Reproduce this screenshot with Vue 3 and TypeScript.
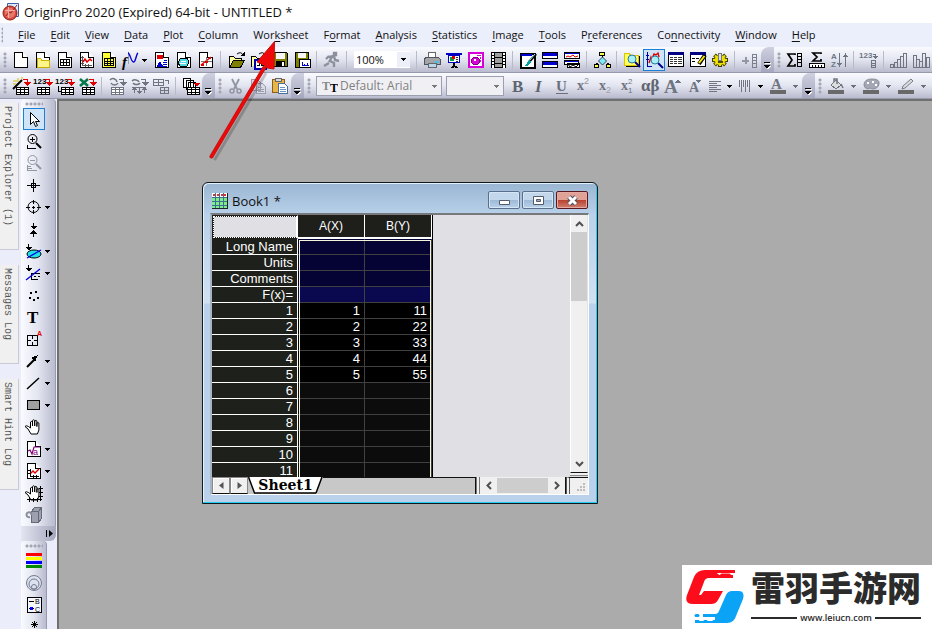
<script setup lang="ts">
import { h } from 'vue'

interface Shape {
  d?: string
  f?: string
  s?: string
  w?: number
  smooth?: boolean
  t?: string
  x?: number
  y?: number
  size?: number
  bold?: boolean
  italic?: boolean
  serif?: boolean
}

const K = '#000'
const G = '#6f7682'
const OL = '#808000'
const fill = (d: string, f = K): Shape => ({ d, f })
const line = (d: string, s = K, w = 1): Shape => ({ d, s, w })
const soft = (d: string, s = K, w = 1, f = 'none'): Shape => ({ d, s, w, f, smooth: true })
const text = (t: string, x: number, y: number, size: number, f = K, o: Partial<Shape> = {}): Shape => ({ t, x, y, size, f, ...o })

const page = (f = '#fff'): Shape[] => [{ d: 'M4.5 3.5h8l5 5v10h-13z', f, s: K }, { d: 'M12.5 3.5v5h5', f: '#fff', s: K }]
const table = (x: number, y: number, c = K): Shape[] => [
  { d: `M${x + 0.5} ${y + 0.5}h12v7h-12z`, f: '#fff', s: c },
  line(`M${x} ${y + 2.5}h13M${x} ${y + 5.5}h13M${x + 4.5} ${y}v8M${x + 8.5} ${y}v8`, c),
]
const redArrow = (c = '#e00000'): Shape[] => [line('M13 4.500h4.500v4', c), fill('M14 7h7l-3.500 4z', c)]
const lens = (x: number, y: number, c = '#a8f0f8'): Shape[] => [
  soft(`M${x + 3} ${y + 3}l5 5`, '#00008b', 2),
  soft(`M${x - 4} ${y}a4 4 0 1 0 8 0a4 4 0 1 0-8 0`, '#2a7a9a', 1, c),
]
const axes = line('M7.5 9v7.5h8', K)
const handD = 'M8 18l-3-5-3-2.5q1-1.500 3.500 0l2 1.500V6q1.500-1.500 2 0v4V4.500q1.300-1.500 2.200 0V10V5q1.300-1.300 2.200 0v5.500V7q1.500-1 2 0v7l-1.500 4z'

const icons: Record<string, Shape[]> = {
  new: page(),
  folder: [...page(), { d: 'M5.500 9.500h3l1.500 2h7v6.500h-11.500z', f: '#fff68a', s: '#c8b000' }],
  book: [...page(), line('M6 10.500h10M6 13.500h10M6 16.500h10M6.500 10v7M9.500 10v7M12.500 10v7M15.500 10v7')],
  graph: [...page(), line('M6.500 7v9.500h9M5 8.500h3M5 11.500h3M5 14.500h3M9.500 15v3M12.500 15v3', '#555'), soft('M7 13l2-3 2 3 3-3 2 2', '#e00000', 1.5)],
  matrix: [...page('#ffff30'), { d: 'M6.500 9.500h9v7h-9z', f: '#ffff30', s: K }, line('M6 12h10M6 14.500h10M9.500 9v8M12.500 9v8')],
  func: [soft('M8.500 3v12', '#9aa0b8', 1), text('f', 2, 18, 15, K, { bold: true, italic: true, serif: true }), soft('M8 4c2 0 3 9 5.500 9S16 5 18 4', '#0000d0', 1.4)],
  layout: [...page(), fill('M6 6h6v4H6z', '#e00000'), line('M13 11.500h3M12 13.500h4M12 15.500h4M6 17.500h10', '#0000c8'), fill('M6 17l3-5 3 5z', '#0000c8')],
  notes: [...page(), { d: 'M7 10l7-1 2 4-2 4H7l-2-3z', f: '#54dbe8', s: K, w: 1 }, line('M8 12.500h5M7 14.500h6', '#fff')],
  xyz: [...page(), soft('M6 16L16 8', '#e00000', 1.5), line('M11.500 8v9M6 12.500h11', '#777'), fill('M6 15h3v2H6zM10 12h3v2h-3zM14 8h2v2h-2z', '#e00000')],
  open: [{ d: 'M4.500 18.500v-11h4l2 2h6v3', f: '#ffffa0', s: K }, { d: 'M4.500 18.500l4-7h11l-4 7z', f: OL, s: K }, soft('M12 5q4-3 6 1', K), fill('M15 7h5V3z')],
  opengraph: [{ d: 'M4.500 17.500v-10h4l2 2h6v3', f: '#ffffa0', s: K }, { d: 'M7.500 10.500h11v9h-11z', f: '#fff', s: '#0000b0', w: 2 }, soft('M12 5q4-3 6 1', K), fill('M15 7h5V3z'), line('M10 16h2v-2h2v2h3', K)],
  save: [{ d: 'M4.500 3.500h13l1 1v13h-13l-1-1z', f: OL, s: K }, fill('M7 4h9v6H7z', '#f5f5f5'), fill('M7 12h9v6H7z'), fill('M13 13h2v4h-2z', '#fff')],
  savegraph: [{ d: 'M4.500 3.500h13v15h-13z', f: OL, s: K }, fill('M7 4h8v5H7z', '#f5f5f5'), { d: 'M8.500 10.500h11v8h-11z', f: '#fff', s: K }, line('M11 13v3.500h7M13 15v2M16 14v3', '#0000d0')],
  run: [soft('M13 4h2v2h-2zM8 8l5-1 1 4 4 1M11 8l-3 5M9 12l4 2v4M5 10l3-3M3 17l5-3', '#8b909c', 2.4)],
  print: [{ d: 'M7.500 3.500h7v6h-7z', f: '#fff', s: '#666' }, { d: 'M4.500 8.500h13l2 2v5h-16v-5z', f: '#a3a5a8', s: '#50545a' }, fill('M14 12h4v2h-4z', '#4ac0e8'), { d: 'M7.500 14.500h8v4h-8z', f: '#b8d6ee', s: '#666' }],
  slides: [fill('M3 4h16v2H3z', '#0000c0'), { d: 'M5.500 6.500h11v7h-11z', f: '#fff', s: '#0000c0' }, fill('M7 8h4v4H7z', '#00a040'), fill('M9 7h3v3H9z', '#e00000'), line('M13 8.500h2M13 10.500h2M13 12.500h2', '#333'), line('M11 14v3', K, 2), line('M8 18h3M12 18h3M9 17h5', K)],
  palette: [fill('M3 3h16v16H3z', '#d800d8'), fill('M5 5h12v12H5z', '#fff'), { d: 'M6.500 10.500l2-2h4l2 2v3l-2 2h-4l-2-2z', f: '#d800d8', s: '#800080' }, fill('M9 10h2v2H9z', '#fff'), line('M15.500 8v2M15.500 11v2M12 6.500h4', '#d800d8')],
  film: [fill('M4 3h15v16H4z'), fill('M8 4h7v4H8zM8 9h7v5H8zM8 15h7v3H8z', '#a0a0a0'), line('M6 4v15M17 4v15', '#fff', 2), line('M4 6.500h4M4 9.500h4M4 12.500h4M4 15.500h4M15 6.500h4M15 9.500h4M15 12.500h4M15 15.500h4')],
  brush: [{ d: 'M3.500 4.500h14v14h-14z', f: '#fff', s: K, w: 2 }, fill('M4 5h11v2H4z', '#0000d0'), soft('M19 5l-7 8', K, 2.6), soft('M18 5l-6 7', '#9ff', 1), fill('M12 11l2 2-4 4H8z', '#00a0a0')],
  tiles: [{ d: 'M3.500 3.500h15v6h-15zM3.500 12.500h15v6h-15z', f: '#fff', s: K, w: 1 }, fill('M4 4h14v3H4zM4 13h14v3H4z', '#0000d0')],
  charts: [{ d: 'M3.500 3.500h15v6h-15z', f: '#fff', s: K }, line('M4 4.500h14', '#0000d0'), soft('M5 8l2-1 2 1 3-2 2 2 3-1', '#e00000'), { d: 'M3.500 11.500h14v4h-14zM6.500 14.500h12v4h-12z', f: '#fff', s: K }, line('M4 12.500h13', '#0000d0'), soft('M7 15l2 3 3-2 3 2 3-3')],
  tree: [line('M11.500 7v3M7 14.500h-1.500v2M16 14.500h1.500v2'), { d: 'M8.500 3.500h5v3h-5zM3.500 15.500h4v3h-4zM15.500 15.500h4v3h-4z', f: '#ffff50', s: K }, { d: 'M11.500 8l4 4-4 4-4-4z', f: '#7fe9f5', s: '#345', smooth: true }],
  find: [{ d: 'M3.500 4.500h5l1 2h8v10h-14z', f: '#ffff60', s: '#d8c400' }, line('M18.500 7v10.500H5', K), ...lens(11, 10)],
  findgraph: [line('M4.500 3v14h4M3 6.500h3M3 10.500h3', '#0000a0'), soft('M6 14L8 8l1 2 2-5 2 1 2-2 1 4', '#e00000', 1.4), ...lens(12, 11)],
  list: [{ d: 'M3.500 4h15v13h-15z', f: '#fff', s: K }, fill('M3 3h16v3H3z', '#000080'), line('M5 8.500h3M9 8.500h3M13 8.500h4M5 10.500h3M9 10.500h3M13 10.500h4M5 12.500h3M9 12.500h3M13 12.500h4M5 14.500h3M9 14.500h3M13 14.500h4', '#333')],
  edit: [{ d: 'M3.500 4h15v13h-15z', f: '#fff', s: K }, fill('M3 3h16v3H3z', '#000080'), line('M5 9.500h3M9 9.500h3M5 12.500h3'), soft('M18 6l-6 9', K, 4), soft('M17.500 7L12 14', '#ffe800', 2)],
  gear: [
    soft('M11 4v14M3 11h16M5.500 6l11 10M16.500 6l-11 10', '#403c00', 4),
    soft('M11 5v12M4 11h14M6 6.500l10 9M16 6.500l-10 9', '#f0e200', 2),
    soft('M6 11a5 4.500 0 1 0 10 0a5 4.500 0 1 0-10 0', '#f0e200', 1, '#f0e200'),
    { d: 'M9.500 4.500h3v7h-3z', f: '#ddd', s: '#777' },
    fill('M9 12h5v2H9z', '#504800'),
  ],
  addcol: [line('M3 12h7M6.500 8v7', '#9297a4', 2), line('M13.500 5.500h4v13h-4zM13 8.500h5M13 11.500h5M13 14.500h5', '#7b808c')],
  sumcol: [soft('M11 6V5H4l4 6-4 6h7v-2', K, 1.7), line('M13.500 4.500h4v13h-4zM13 7.500h5M13 10.500h5M13 13.500h5')],
  sumrow: [soft('M15 5V4H7l4 4-4 4h8v-2', K, 1.7), { d: 'M3.500 14.500h15v4h-15z', f: '#fff', s: K }, line('M6.500 16v3M9.500 16v3M12.500 16v3M15.500 16v3')],
  sort: [text('A', 3, 10, 8, G, { bold: true }), text('Z', 3, 18, 8, G, { bold: true }), line('M11.500 4v13M17.500 5v13', G), fill('M9 14h5l-2.500 4zM15 8h5l-2.500-4z', G)],
  numtable: [text('123', 1, 9, 8, G, { bold: true }), line('M15 5.500h2v3', G), fill('M14 7h6l-3 3z', G), line('M13.500 11.500h4v7h-4zM13 14.500h5M13 16.500h5', G)],
  bars: [line('M2.500 15.500h3v3h-3zM6.500 13.500h3v5h-3zM9.500 10.500h3v8h-3zM12.500 7.500h3v11h-3zM15.500 4.500h3v14h-3z', G)],
  bars2: [line('M3.500 6.500h3v12h-3zM6.500 10.500h3v8h-3zM9.500 12.500h3v6h-3zM12.500 4.500h3v14h-3zM16.500 8.500h3v10h-3z', G)],
  wizard: [soft('M3 14l9-9', K, 2), soft('M8 3v4M3 6h4M3 9h3M12 2v2', '#d0c000', 1), ...redArrow(), ...table(6, 12)],
  imp: [text('123', 1, 9, 8, K, { bold: true }), ...redArrow(), ...table(5, 12)],
  imp2: [text('123', 1, 9, 8, K, { bold: true }), ...redArrow(), line('M4.500 11v5h3'), ...table(7, 12)],
  excel: [soft('M4 4l8 7M12 4l-8 7', '#007848', 2.5), ...redArrow(), ...table(6, 12)],
  rec1: [...redArrow(G), ...table(5, 12, G), soft('M4 5a4 4 0 0 1 7 2M12 8a4 4 0 0 1-7 0', G, 1.5)],
  rec2: [...redArrow(G), line('M4 12.500h14', G), soft('M4 6a4 3 0 0 1 7 1M12 8a4 3 0 0 1-7 0', G, 1.5), line('M6.500 12v6M11.500 12v6M16.500 12v6', G), fill('M4 15h5l-2.500-3zM9 16h5l-2.500 3zM14 15h5l-2.500-3z', G)],
  rec3: [line('M3.500 4.500h10v6h-10zM3 7.500h11M8.500 4v7', G), line('M15 5.500h3v3M10.500 12.500h8v6h-8zM10 15.500h9M14.500 12v7', G)],
  dup: [{ d: 'M3.500 3.500h7v9h-7zM6.500 5.500h7v9h-7zM8.500 7.500h7v9h-7z', f: '#fff', s: K }, fill('M14 8h6l-3 4z', '#e00000'), ...table(7, 12)],
  cut: [soft('M7 4l5 10M14 4L9 14', '#9095a2', 1.8), soft('M5 16a2 2 0 1 0 4 0a2 2 0 1 0-4 0M12 16a2 2 0 1 0 4 0a2 2 0 1 0-4 0', '#9095a2', 1.5)],
  copy: [{ d: 'M4.500 4.500h6l3 3v8h-9zM9.500 8.500h6l3 3v7h-9z', f: '#d8dae4', s: '#9a9eac' }, line('M6 9.500h3M11 12.500h4M11 14.500h6M11 16.500h6', '#9a9eac')],
  paste: [{ d: 'M3.500 4.500h12v13h-12z', f: '#e8b54a', s: '#8a6018' }, { d: 'M6.500 3.500h6v3h-6z', f: '#d8d8d8', s: '#666' }, { d: 'M9.500 8.500h6l3 3v7h-9z', f: '#fff', s: '#4b6f9c' }, line('M11 12.500h5M11 14.500h6M11 16.500h6', '#6b93c0')],
  bold: [text('B', 5, 17, 17, '#5f6570', { bold: true, serif: true })],
  italic: [text('I', 6, 17, 17, '#5f6570', { bold: true, italic: true, serif: true })],
  underline: [text('U', 5, 16, 15, '#6b717c', { serif: true, bold: true }), line('M5 18.500h12', '#6b717c')],
  sup: [text('x', 4, 15, 14, G, { bold: true, serif: true }), text('2', 11, 9, 9, '#8f94a0')],
  sub: [text('x', 4, 15, 14, G, { bold: true, serif: true }), text('2', 11, 18, 9, '#a0a4b0')],
  supsub: [text('x', 4, 15, 14, G, { bold: true, serif: true }), text('2', 11, 9, 8, G), text('1', 11, 18, 8, G)],
  greek: [text('αβ', 2, 16, 17, '#5f6570', { bold: true, serif: true })],
  bigger: [text('A', 3, 18, 19, G, { bold: true, serif: true }), fill('M14 8h6l-3-4z', G)],
  smaller: [text('A', 6, 17, 14, G, { bold: true, serif: true }), fill('M13 5h5l-2.500 3z', G)],
  align: [line('M4 6.500h12M4 8.500h8M4 10.500h12M4 12.500h8M4 14.500h12M4 16.500h8', G)],
  columns: [line('M3.500 5v7M5.500 5v12M7.500 5v7M9.500 5v12M11.500 5v7M13.500 5v12', G)],
  color: [text('A', 4, 14, 15, G, { bold: true, serif: true }), fill('M3 15h16v4H3z', '#696969')],
  bucket: [{ d: 'M6 10l5-5 5 5-5 4z', f: '#ddd', s: G }, soft('M9 7V4h3v5M16 9l2 4', G, 1.5), fill('M3 15h16v4H3z', '#696969')],
  brushfill: [soft('M4 10q0-6 8-6t7 5-7 5q-2-2-4 0-4-1-4-4z', '#888d98', 1, '#a5a8b4'), fill('M7 7h2v2H7zM12 6h2v2h-2zM15 9h2v2h-2z', '#fff'), fill('M3 15h16v4H3z', '#696969')],
  pen: [soft('M7 14l1-3 8-7 2 2-8 7z', '#777c88', 1, '#ddd'), fill('M3 15h16v4H3z', '#696969')],
  pointer: [{ d: 'M7.500 4.500v12l3-3 2 5 2-1-2-4h4z', f: '#fff', s: K, smooth: true }],
  zoomin: [soft('M5 9a4.500 4.500 0 1 0 9 0a4.500 4.500 0 1 0-9 0', K), line('M9.500 7v5M7 9.500h5', K), soft('M13 13l5 5', K, 2), line('M4.500 15v3h8')],
  zoomout: [soft('M5 8a4.500 4.500 0 1 0 9 0a4.500 4.500 0 1 0-9 0', '#9297a4'), line('M7 8.500h5', '#9297a4'), soft('M13 12l5 5', '#9297a4', 2), line('M4.500 13v5.500h9M5 14.500h3M5 16.500h4', '#9297a4')],
  cross: [line('M10.500 5v13M4 11.500h13'), line('M8.500 9.500h4v4h-4z')],
  target: [soft('M5 11a5.500 5.500 0 1 0 11 0a5.500 5.500 0 1 0-11 0', K), line('M10.500 4v4M10.500 14v4M3 11.500h4M14 11.500h4M9 11.500h3M10.500 10v3')],
  range: [line('M10.500 5v6M10.500 13v6'), fill('M7 8h7l-3.500 3.500zM7 16h7l-3.500-4z')],
  mask: [soft('M4 14a7 4 0 1 0 14 0a7 4 0 1 0-14 0', K, 1, '#20e0e8'), soft('M4 18L18 10', '#0000e0', 1.3), line('M5.500 4v6'), fill('M2 7h7l-3.500 3.500z')],
  maskgraph: [line('M8.500 11v7M9 11.500h8M9 17.500h6', K), line('M11 14.500h2M15 14.500h2', K), soft('M3 18L17 7', '#0000e0', 1.3), line('M5.500 3v6'), fill('M2 6h7l-3.500 3.500z')],
  dots: [fill('M7 8h2v2H7zM12 7h2v2h-2zM6 13h2v2H6zM10 15h2v2h-2zM14 13h2v2h-2z')],
  text: [text('T', 4, 17, 17, K, { bold: true, serif: true })],
  scale: [line('M4.500 7.500h10v10h-10z'), line('M9.500 8v3M9.500 14v4M4 12.500h4M11 12.500h4'), text('A', 14, 8, 7, '#e00000', { bold: true })],
  arrow: [soft('M4 17l8-8', K, 2), fill('M8 8l7-3-3 7z')],
  line: [soft('M4 17L16 6', K, 1.5)],
  rect: [{ d: 'M4.500 6.500h12v9h-12z', f: '#a0a0a0', s: K }],
  hand: [{ d: handD, f: '#fff', s: K, smooth: true }],
  formula: [...page(), soft('M5 13l2-1 2 4 2-7h6', '#800080', 1.2), text('a', 10, 17, 9, '#800080')],
  insgraph: [...page(), axes, soft('M7 14l3-3 2 2 4-4', '#e00000', 1.4), line('M5 10.500h3M5 13.500h3M10.500 15v3M13.500 15v3')],
  handaxes: [{ d: handD, f: '#fff', s: K, smooth: true }, line('M17.500 4v15M16 6.500h4M16 10.500h4M16 14.500h4M4 17.500h15M6.500 16v4M10.500 16v4M14.500 16v4')],
  cube: [{ d: 'M8.500 7.500l3-4h7v11l-3 4h-7z', f: '#9ca1ad', s: '#646a76' }, line('M15.500 18V7.500l3-4M8 7.500h7', '#646a76'), soft('M7 13a2.500 2.500 0 1 1 1.500-2', '#8a8f9c', 2)],
  stripes: [fill('M3 3h16v3H3z', '#f00'), fill('M3 7h16v3H3z', '#ff0'), fill('M3 11h16v3H3z', '#00f'), fill('M3 15h16v3H3z', '#080')],
  circle: [soft('M3.500 11a7.500 7.500 0 1 0 15 0a7.500 7.500 0 1 0-15 0M6 12a5 5 0 1 0 10 0a5 5 0 1 0-10 0M8.500 15a2.500 2.500 0 1 0 5 0a2.500 2.500 0 1 0-5 0', '#767c90', 1, '#dce1ee')],
  legend: [{ d: 'M4.500 3.500h14v15h-14z', f: '#f5f7ff', s: K }, line('M6 7.500h5M6 14.500h5', K), fill('M7 13h3v3H7z', '#00f'), text('B', 12, 10, 7), text('C', 12, 18, 7)],
  star: [line('M11.500 5v7M8 8.500h7', K, 1), soft('M9 6l5 5M14 6l-5 5'), line('M4 14.500h15')],
}

const Icon = (props: { name: string }) =>
  h(
    'svg',
    { width: 22, height: 22, viewBox: '0 0 22 22', 'aria-hidden': 'true' },
    (icons[props.name] ?? []).map((p) =>
      p.t
        ? h('text', {
            x: p.x, y: p.y, fill: p.f, 'font-size': p.size,
            'font-weight': p.bold ? 700 : 400,
            'font-style': p.italic ? 'italic' : 'normal',
            'font-family': p.serif ? 'Liberation Serif, serif' : 'Liberation Sans, sans-serif',
          }, p.t)
        : h('path', {
            d: p.d, fill: p.f ?? 'none', stroke: p.s ?? 'none', 'stroke-width': p.w ?? 1,
            'shape-rendering': p.smooth ? 'auto' : 'crispEdges',
          }),
    ),
  )
Icon.props = ['name']

const menus = ['&File', '&Edit', '&View', '&Data', '&Plot', '&Column', 'Wor&ksheet', 'F&ormat', '&Analysis', '&Statistics', '&Image', '&Tools', 'P&references', 'Co&nnectivity', '&Window', '&Help'].map((m) => {
  const i = m.indexOf('&')
  return { pre: m.slice(0, i), key: m[i + 1], post: m.slice(i + 2) }
})

/* "|" is a separator, "v" a menu arrow ("V" is greyed), "zoom", "font" and "size" are drop-downs */
interface Bar { items: string[]; cap: boolean }
const bar = (s: string, cap = true): Bar => ({ items: s.split(' '), cap })
const rows: Bar[][] = [
  [
    bar('new folder book graph matrix func v layout notes xyz | open opengraph save savegraph | run | zoom | print slides palette film | brush tiles charts | tree | find findgraph list edit gear | addcol'),
    bar('sumcol sumrow sort | numtable | bars bars2', false),
  ],
  [
    bar('wizard imp imp2 excel | rec1 rec2 rec3 | dup'),
    bar('cut copy paste'),
    bar('font size bold italic underline sup sub supsub greek bigger smaller align v columns v color V'),
    bar('bucket V brushfill V pen V', false),
  ],
]

const tools: { icon: string; drop?: boolean }[] = [
  { icon: 'pointer' }, { icon: 'zoomin' }, { icon: 'zoomout' }, { icon: 'cross' }, { icon: 'target', drop: true },
  { icon: 'range' }, { icon: 'mask', drop: true }, { icon: 'maskgraph', drop: true }, { icon: 'dots' }, { icon: 'text' },
  { icon: 'scale' }, { icon: 'arrow', drop: true }, { icon: 'line', drop: true }, { icon: 'rect', drop: true }, { icon: 'hand' },
  { icon: 'formula', drop: true }, { icon: 'insgraph', drop: true }, { icon: 'handaxes' }, { icon: 'cube' },
]
const styleTools = ['stripes', 'circle', 'legend', 'star']
const docks = ['Project Explorer (1)', 'Messages Log', 'Smart Hint Log']

const sheet: { label: string; kind: string; a: string; b: string }[] = [
  ...['Long Name', 'Units', 'Comments', 'F(x)='].map((label, i) => ({ label, kind: i === 3 ? 'fx' : 'meta', a: '', b: '' })),
  ...Array.from({ length: 11 }, (_, i) => {
    const n = i + 1
    return { label: String(n), kind: n <= 5 ? 'data' : 'empty', a: n <= 5 ? String(n) : '', b: n <= 5 ? String(n * 11) : '' }
  }),
]
</script>

<template>
  <div class="app">
    <header class="title">
      <svg class="logo" width="20" height="20" viewBox="0 0 20 20" aria-hidden="true">
        <path d="M6.500 1.500h11v13h-11z" fill="#dfe9fb" stroke="#3c5fa8" />
        <circle cx="9" cy="11" r="7" fill="#d9493c" stroke="#8d2018" />
        <circle cx="9" cy="11" r="5" fill="#e8776a" />
        <path d="M5 14l3-4 2 1 6-8" fill="none" stroke="#a01c14" stroke-width="1" />
        <path d="M4 8.500h10M7.500 5v11" stroke="#f4b0a6" />
      </svg>
      <span>OriginPro 2020 (Expired) 64-bit - UNTITLED *</span>
    </header>

    <nav class="menu">
      <i class="grip"></i>
      <button v-for="m in menus" :key="m.pre + m.key + m.post" type="button">{{ m.pre }}<u>{{ m.key }}</u>{{ m.post }}</button>
    </nav>

    <div v-for="(row, r) in rows" :key="r" class="row">
      <div v-for="(group, g) in row" :key="g" class="bar" :class="{ last: !group.cap }" role="toolbar">
        <i class="grip"></i>
        <template v-for="(it, i) in group.items" :key="i">
          <i v-if="it === '|'" class="sep"></i>
          <i v-else-if="it === 'v'" class="drop"></i>
          <i v-else-if="it === 'V'" class="drop wide"></i>
          <span v-else-if="it === 'zoom'" class="combo zoom">
            <select aria-label="Zoom"><option>100%</option></select><i class="drop"></i>
          </span>
          <span v-else-if="it === 'font'" class="combo font">
            <svg width="16" height="18" viewBox="0 0 16 18" aria-hidden="true">
              <text x="0" y="13" font-size="12" font-weight="700" font-family="Liberation Serif, serif" fill="#888">T</text>
              <text x="8" y="15" font-size="12" font-weight="700" font-family="Liberation Serif, serif">T</text>
            </svg>
            <select aria-label="Font"><option>Default: Arial</option></select><i class="drop grey"></i>
          </span>
          <span v-else-if="it === 'size'" class="combo size">
            <select aria-label="Font size"><option></option></select><i class="drop grey"></i>
          </span>
          <button v-else type="button" class="tool" :class="{ on: it === 'findgraph' }" :aria-label="it"><Icon :name="it" /></button>
        </template>
        <button v-if="group.cap" type="button" class="cap" aria-label="More"><i></i></button>
      </div>
    </div>

    <main class="body">
      <aside class="docks">
        <button v-for="d in docks" :key="d" type="button">{{ d }}</button>
      </aside>
      <aside class="side">
        <div class="vbar">
          <i class="hgrip"></i>
          <div v-for="(t, i) in tools" :key="t.icon" class="slot">
            <button type="button" class="tool" :class="{ on: i === 0 }" :aria-label="t.icon"><Icon :name="t.icon" /></button>
            <i v-if="t.drop" class="drop"></i>
          </div>
        </div>
        <button type="button" class="vcap" aria-label="More tools">
          <svg width="9" height="7" viewBox="0 0 9 7" aria-hidden="true"><path d="M1 0h1v7H1zM4 0l4 3.500L4 7z" /></svg>
        </button>
        <div class="vbar narrow">
          <i class="hgrip"></i>
          <div v-for="t in styleTools" :key="t" class="slot">
            <button type="button" class="tool" :aria-label="t"><Icon :name="t" /></button>
          </div>
        </div>
      </aside>

      <section class="desk">
        <div class="win">
          <div class="wtitle">
            <svg width="16" height="16" viewBox="0 0 16 16" shape-rendering="crispEdges" aria-hidden="true">
              <path d="M0 0h15v15H0z" fill="#7dec8b" />
              <path d="M0 0h15v4H0z" fill="#fff" />
              <path d="M1 1h2v2H1zM5 1h2v2H5zM9 1h2v2H9zM12 1h2v2h-2z" fill="#e03030" />
              <path d="M0 4.500h15M0 8.500h15M0 12.500h15M3.500 0v15M7.500 0v15M11.500 0v15" stroke="#3f6f90" />
              <path d="M15.500 0v15.500H0" fill="none" stroke="#222" />
            </svg>
            <span>Book1 *</span>
            <button type="button" aria-label="Minimize"><svg width="13" height="11" viewBox="0 0 13 11"><path d="M1.500 5.500h10v4h-10z" fill="#fff" stroke="#555b68" /></svg></button>
            <button type="button" aria-label="Maximize"><svg width="13" height="11" viewBox="0 0 13 11"><path d="M1.500 1.500h10v8h-10z" fill="#fff" stroke="#555b68" /><path d="M4.500 4.500h4v2h-4z" fill="#8fb0d0" stroke="#555b68" /></svg></button>
            <button type="button" class="close" aria-label="Close"><svg width="13" height="11" viewBox="0 0 13 11"><path d="M3 2l7 7M10 2L3 9" stroke="#4d4f60" stroke-width="5" /><path d="M3 2l7 7M10 2L3 9" stroke="#fff" stroke-width="3" /></svg></button>
          </div>

          <div class="client">
            <div class="upper">
              <div class="pane">
                <div class="grid">
                  <table>
                    <thead>
                      <tr><td class="corner"></td><th scope="col">A(X)</th><th scope="col">B(Y)</th></tr>
                    </thead>
                    <tbody>
                      <tr v-for="s in sheet" :key="s.label" :class="s.kind">
                        <th scope="row">{{ s.label }}</th><td>{{ s.a }}</td><td>{{ s.b }}</td>
                      </tr>
                    </tbody>
                  </table>
                  <div class="frame"></div>
                </div>
              </div>
              <div class="vscroll">
                <button type="button" aria-label="Scroll up"><svg width="9" height="6" viewBox="0 0 9 6"><path d="M1 5l3.500-3.500L8 5" /></svg></button>
                <div class="thumb"></div>
                <button type="button" aria-label="Scroll down"><svg width="9" height="6" viewBox="0 0 9 6"><path d="M1 1l3.500 3.500L8 1" /></svg></button>
              </div>
            </div>
            <div class="lower">
              <button type="button" class="nav" aria-label="Previous sheet"><svg width="5" height="7" viewBox="0 0 5 7"><path d="M4.500 0v7L0 3.500z" fill="#555" /></svg></button>
              <button type="button" class="nav" aria-label="Next sheet"><svg width="5" height="7" viewBox="0 0 5 7"><path d="M0.500 0v7L5 3.500z" fill="#555" /></svg></button>
              <button type="button" class="tab">
                <svg width="75" height="17" viewBox="0 0 75 17" aria-hidden="true"><path d="M0 0h74l-6 16H6z" fill="#fff" /><path d="M0.500 0l6 16M74 0l-6 16M6 16h62" fill="none" stroke="#000" stroke-width="1.500" /></svg>
                <span>Sheet1</span>
              </button>
              <div class="tray"></div>
              <div class="hscroll">
                <button type="button" aria-label="Scroll left"><svg width="6" height="9" viewBox="0 0 6 9"><path d="M5 1L1.500 4.500L5 8" /></svg></button>
                <div class="thumb"></div>
                <button type="button" aria-label="Scroll right"><svg width="6" height="9" viewBox="0 0 6 9"><path d="M1 1l3.500 3.500L1 8" /></svg></button>
              </div>
              <div class="sizer">
                <svg width="9" height="9" viewBox="0 0 9 9" aria-hidden="true"><path d="M6 0h2v2H6zM3 3h2v2H3zM6 3h2v2H6zM0 6h2v2H0zM3 6h2v2H3zM6 6h2v2H6z" fill="#bdbdbd" /></svg>
              </div>
            </div>
          </div>
        </div>
      </section>
    </main>

    <svg class="pointer" width="84" height="126" viewBox="0 0 84 126" aria-hidden="true">
      <path d="M5.500 121L57 34" stroke="#000" stroke-opacity=".2" stroke-width="3" transform="translate(3 3)" />
      <path d="M5.500 120.500L58 32" stroke="#b81818" stroke-width="4" stroke-linecap="round" />
      <path d="M5.500 120.500L58 32" stroke="#f00808" stroke-width="2.500" stroke-linecap="round" />
      <path d="M68.500 5.500L51 26l7 3 3 3 7 1z" fill="#f00808" stroke="#c81010" />
    </svg>

    <div class="brand">
      <svg width="60" height="56" viewBox="0 0 60 56" aria-hidden="true">
        <path d="M50 1H20Q12 1 9 8L2 26q-3 9 6 9h18q5 0 7-4l5-9H19l-3 4h-2l5-13q1-4 5-4h24V6H32V4h18z" fill="#fc0d1b" />
        <path d="M10 54h32q7 0 9-7l7-17q2-8-4-8h-7q-4 0-6 4l-7 16q-1 3-4 3H18v3h12v3H10z" fill="#0ba3f5" />
        <path d="M11 46.500h2" stroke="#0ba3f5" stroke-width="3" stroke-linecap="round" />
        <path d="M31 6.500h1M37 6.500h7" stroke="#fc0d1b" stroke-width="4" stroke-linecap="round" />
        <path d="M15 51h3M23 51h4" stroke="#fff" stroke-width="2" stroke-linecap="round" />
      </svg>
      <div class="words">
        <strong>雷羽手游网</strong>
        <small>www.leiucn.com</small>
      </div>
    </div>
  </div>
</template>

<style>
body { margin: 0; overflow: hidden; }
</style>

<style scoped>
.app { position: relative; display: flex; flex-direction: column; height: 100vh; overflow: hidden; background: #ebedfb; color: #111; font-family: "Open Sans", "Noto Sans", sans-serif; font-size: 12px; }
button, select { border: 0; margin: 0; padding: 0; background: none; color: inherit; font: inherit; border-radius: 0; }
svg { display: block; flex: none; }

.title { flex: none; display: flex; align-items: center; gap: 3px; height: 23px; padding-left: 1px; background: #fff; font-size: 13px; white-space: nowrap; }
.menu { flex: none; display: flex; align-items: center; gap: 15px; height: 24px; background: #ebeefb; font-size: 11px; }
.menu .grip { width: 3px; background-position: -2px 0; }
.menu button { line-height: 20px; white-space: nowrap; }
.menu u { text-underline-offset: 2px; }

.grip { flex: none; align-self: center; box-sizing: border-box; width: 10px; height: 16px; background: radial-gradient(circle at 5px 2px, #a4a6b4 1px, transparent 2px) 0 0 / 10px 4px; }
.row { flex: none; display: flex; height: 26px; background: #b5b7cd; }
.bar { flex: none; display: flex; align-items: center; height: 25px; background: linear-gradient(#fafbff, #e3e5f0 50%, #babccf); border-bottom: 1px solid #9799ac; }
.bar.last { flex: 1 0 0; }
.sep { flex: none; width: 1px; height: 18px; margin: 0 4px 0 3px; background: #b9bbc8; }
.tool { flex: none; display: block; box-sizing: border-box; width: 22px; height: 22px; }
.tool.on { background: #cfe4f7; box-shadow: inset 0 0 0 1px #1b7fd6; }
.drop { flex: none; align-self: center; width: 9px; height: 22px; background: linear-gradient(#000, #000) 0 10px / 5px 1px no-repeat, linear-gradient(#000, #000) 1px 11px / 3px 1px no-repeat, linear-gradient(#000, #000) 2px 12px / 1px 1px no-repeat; }
.drop.wide { margin-left: 4px; opacity: .5; }
.drop.grey { opacity: .5; }
.cap { flex: none; align-self: stretch; display: flex; align-items: flex-end; justify-content: center; width: 13px; padding-bottom: 3px; border-radius: 8px 0 0 0; background: linear-gradient(#cfd1e0, #a5a7be); }
.cap i { width: 7px; height: 7px; background: linear-gradient(#000, #000) 0 0 / 6px 1px no-repeat, linear-gradient(#000, #000) 0 3px / 6px 1px no-repeat, linear-gradient(#000, #000) 1px 4px / 4px 1px no-repeat, linear-gradient(#000, #000) 2px 5px / 2px 1px no-repeat; filter: drop-shadow(1px 1px 0 #fff); }
.combo { flex: none; display: flex; align-items: center; box-sizing: border-box; overflow: hidden; }
.combo select { flex: 1; min-width: 0; appearance: none; outline: 0; white-space: nowrap; }
.zoom { width: 56px; height: 17px; margin: 0 3px; padding-left: 2px; background: #fff; font-size: 11px; }
.zoom .drop { width: 13px; height: 15px; background-color: #eceef8; background-position: 4px 6px, 5px 7px, 6px 8px; }
.font { width: 126px; height: 20px; margin: 0 2px; padding-left: 5px; gap: 2px; border: 1px solid #9c9fae; background: #f0f0f4; color: #808080; }
.size { width: 58px; height: 20px; margin: 0 3px 0 2px; border: 1px solid #9c9fae; background: #f0f0f4; }

.body { flex: 1; min-height: 0; display: flex; }
.docks { flex: none; display: flex; flex-direction: column; align-items: flex-start; gap: 15px; width: 21px; padding-top: 4px; }
.docks button { writing-mode: vertical-rl; box-sizing: border-box; width: 19px; padding: 3px 4px 23px 0; background: #f0f0f0; border-right: 1px solid #c9cad6; border-bottom: 1px solid #c9cad6; color: #555; font: 10px/13px "Liberation Mono", monospace; text-align: start; white-space: nowrap; }
.side { flex: none; width: 36px; overflow: hidden; }
.vbar { box-sizing: border-box; width: 35px; padding: 3px 0 0 2px; border-radius: 4px 4px 0 0; background: linear-gradient(90deg, #fafbff, #e3e5f0 50%, #b9bbcf); border-right: 1px solid #9799ac; }
.vbar.narrow { width: 26px; }
.hgrip { display: block; width: 18px; height: 6px; margin-left: 2px; background: radial-gradient(circle at 2px 2px, #a4a6b4 1px, transparent 2px) 0 0 / 4px 6px; }
.slot { display: flex; height: 22px; }
.vcap { display: flex; justify-content: flex-end; align-items: center; box-sizing: border-box; width: 35px; height: 15px; padding-right: 2px; border-radius: 0 0 6px 0; background: linear-gradient(90deg, #e3e5f0, #a5a7be); }

.desk { flex: 1; min-width: 0; position: relative; overflow: hidden; background: #ababab; border-top: 2px solid #707070; border-left: 2px solid #707070; }
.win { position: absolute; left: 143px; top: 81px; display: flex; flex-direction: column; box-sizing: border-box; width: 396px; height: 322px; padding: 0 8px 8px 7px; border: 1px solid #101820; border-radius: 6px 6px 0 0; background: linear-gradient(#9ab6d2, #b9d1ea 32px, #d0e1f3 120px, #b9d1ea 121px); box-shadow: inset -1px -1px 0 #22cdf0, inset 1px 1px 0 #e4f2fc; }
.wtitle { flex: none; display: flex; align-items: center; gap: 2px; height: 30px; padding: 2px 1px 0 2px; box-sizing: border-box; font-size: 13px; }
.wtitle > svg { margin: 3px 2px 0 0; }
.wtitle span { flex: 1; padding-top: 4px; }
.wtitle button { display: flex; align-items: center; justify-content: center; box-sizing: border-box; width: 32px; height: 18px; margin-top: 2px; border: 1px solid #5b6f8c; border-radius: 2px; background: linear-gradient(#c3d7ec 50%, #9db9d6 50%, #b8d2ea); box-shadow: inset 0 0 0 1px #d5e5f4; }
.wtitle .close { border-color: #5a1720; background: linear-gradient(#e0a196 50%, #b8402c 50%, #d08070); box-shadow: inset 0 0 0 1px #e4aba2; }

.client { flex: 1; min-height: 0; display: flex; flex-direction: column; border: 1px solid #fff; border-top: 2px solid #77787c; border-left: 2px solid #a9b4c2; background: #e0dfe4; }
.upper { flex: 1; min-height: 0; display: flex; }
.pane { flex: 1; min-width: 0; overflow: hidden; }
.grid { position: relative; width: 221px; background: #000; }
table { width: 220px; table-layout: fixed; border-collapse: separate; border-spacing: 0; color: #fff; font: 13px/15px "Liberation Sans", Arial, sans-serif; }
th, td { box-sizing: border-box; padding: 0; font-weight: 400; overflow: hidden; }
thead tr { height: 24px; }
thead th { background: #1e1e1a; border-right: 1px solid #fff; border-bottom: 2px solid #fff; font-size: 12px; text-align: center; }
.corner { width: 86px; background: #e0dfe4; border: 2px solid #1e1e1a; border-right: 2px solid #fff; outline: 1px dotted #fff; outline-offset: -2px; }
tbody tr { height: 16px; }
tbody th { height: 16px; padding-right: 4px; text-align: right; background: #1e201b; border-right: 1px solid #fff; border-bottom: 1px solid #fff; white-space: nowrap; }
tbody td { height: 16px; padding-right: 4px; text-align: right; background: #0c0c0c; border-right: 1px solid #404040; border-bottom: 1px solid #404040; }
.meta td { background: #050334; }
.fx td { background: #0a084e; }
.data td { background: #000; }
.frame { position: absolute; left: 87px; top: 25px; right: 2px; bottom: 0; border: 1px solid #f4f4d8; border-bottom: 0; pointer-events: none; }

.vscroll { flex: none; display: flex; flex-direction: column; box-sizing: border-box; width: 18px; margin-bottom: 4px; border-left: 1px solid #fff; border-right: 1px solid #e3e3e3; border-bottom: 1px solid #111; background: #f0f0f0; box-shadow: 0 2px 0 #f0f0f0, 0 3px 0 #888; }
.vscroll button { display: flex; align-items: center; justify-content: center; height: 17px; }
.vscroll .thumb { height: 69px; margin-bottom: auto; background: #cdcdcd; }
.vscroll path, .hscroll path { fill: none; stroke: #505050; stroke-width: 2; }
.lower { flex: none; display: flex; height: 17px; background: #c8c8c8; }
.nav { flex: none; display: flex; align-items: center; justify-content: center; box-sizing: border-box; width: 18px; background: #f0f0f0; border: 1px solid #888; border-bottom-color: #111; box-shadow: inset 1px 1px 0 #fff; }
.tab { flex: none; position: relative; width: 75px; color: #000; font: bold 14px/16px "DejaVu Serif", "Liberation Serif", serif; }
.tab span { position: absolute; inset: 0; }
.tray { flex: 1; border-top: 1px solid #111; border-right: 1px solid #111; }
.hscroll { flex: none; display: flex; align-items: center; box-sizing: border-box; width: 90px; border-left: 4px double #777; border-right: 1px solid #111; background: #f0f0f0; }
.hscroll button { display: flex; align-items: center; justify-content: center; width: 17px; height: 17px; }
.hscroll .thumb { flex: 1; height: 15px; background: #cdcdcd; }
.sizer { flex: none; display: flex; align-items: flex-end; justify-content: flex-end; box-sizing: border-box; width: 22px; padding: 2px; border-left: 4px double #555; background: #f0f0f0; border-top: 1px solid #111; }

.pointer { position: absolute; left: 206px; top: 36px; fill: none; pointer-events: none; }

.brand { position: absolute; right: 0; bottom: 0; display: flex; gap: 6px; box-sizing: border-box; height: 64px; padding: 4px 11px 0 3px; background: #fff; color: #2b2b2b; }
.words { display: flex; flex-direction: column; align-items: center; }
.words strong { font: 900 34px/42px "Liberation Serif", "Noto Sans CJK SC", serif; white-space: nowrap; }
.words small { display: flex; align-items: center; gap: 3px; align-self: stretch; font: 600 9px/14px "Open Sans", sans-serif; }
.words small::before, .words small::after { content: ""; flex: 1; height: 2px; background: #2b2b2b; }
</style>
